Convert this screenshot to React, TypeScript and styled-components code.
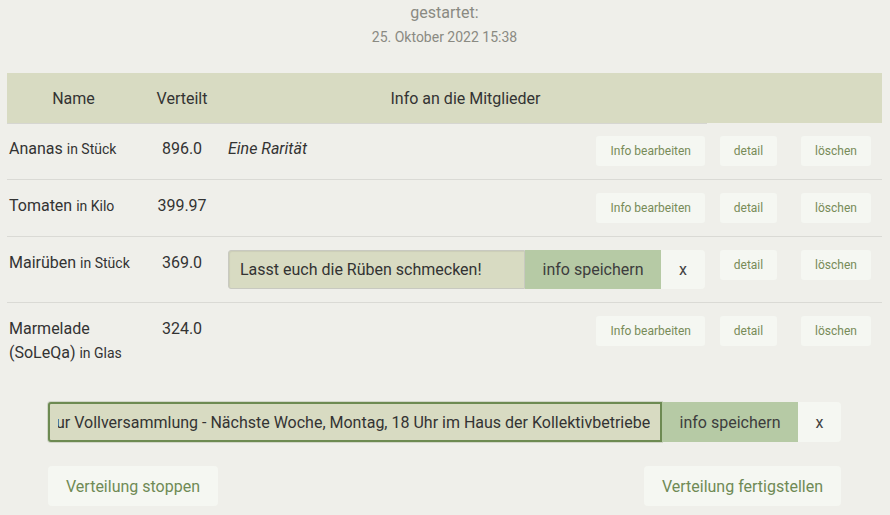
import React, { useEffect, useRef } from "react";
import styled, { createGlobalStyle } from "styled-components";

const Global = createGlobalStyle`
  html, body { margin: 0; padding: 0; background: #efefea; }
  body { font-family: Roboto, "Noto Sans", sans-serif; color: #333; }
  * { box-sizing: border-box; }
`;

const Page = styled.div`
  width: 890px;
  padding: 0 8px 0 7px;
`;

const Started = styled.div`
  text-align: center;
  color: #8a8a82;
  margin-bottom: 25px;
`;

const StartedLabel = styled.div`
  font-size: 16px;
  line-height: 26px;
`;

const StartedDate = styled.div`
  font-size: 14px;
  line-height: 22px;
`;

const cols = "133px 84px 483px 83px 92px";

const HeadRow = styled.div`
  display: grid;
  grid-template-columns: ${cols};
  height: 50px;
  background: #d8dbc2;
  align-items: center;
`;

const HeadCell = styled.div<{ $line?: boolean }>`
  height: 100%;
  display: flex;
  align-items: center;
  justify-content: center;
  font-size: 16px;
  color: #333;
  box-shadow: ${(p) => (p.$line ? "0 1px 0 #d6d6d1" : "none")};
`;

const Row = styled.div<{ $last?: boolean }>`
  display: grid;
  grid-template-columns: ${cols};
  align-items: start;
  padding: 13px 0;
  border-bottom: ${(p) => (p.$last ? "none" : "1px solid #dadad5")};
`;

const NameCell = styled.div`
  padding: 1px 0 0 2px;
  font-size: 16px;
  line-height: 24px;
  color: #333;
`;

const Unit = styled.span`
  font-size: 14px;
`;

const NumCell = styled.div`
  padding-top: 1px;
  text-align: center;
  font-size: 16px;
  line-height: 24px;
  color: #333;
`;

const InfoCell = styled.div`
  display: flex;
  align-items: flex-start;
  padding: 0 2px 0 4px;
  min-height: 30px;
`;

const InfoText = styled.em`
  padding-top: 1px;
  font-size: 16px;
  line-height: 24px;
  color: #333;
`;

const ActionCell = styled.div`
  display: flex;
  justify-content: center;
`;

const SmallButton = styled.button<{ $push?: boolean }>`
  height: 30px;
  padding: 0 14px;
  margin-left: ${(p) => (p.$push ? "auto" : "0")};
  border: none;
  border-radius: 3px;
  background: #f5f7f2;
  color: #788b58;
  font-family: Roboto, sans-serif;
  font-size: 12px;
  cursor: pointer;
`;

const Group = styled.div<{ $h: number }>`
  display: flex;
  width: 100%;
  height: ${(p) => p.$h}px;
`;

const InfoInput = styled.input<{ $focus?: boolean }>`
  flex: 1;
  min-width: 0;
  height: 100%;
  background: #d8dbc2;
  border: ${(p) => (p.$focus ? "2px solid #6d8a52" : "1px solid #c8c9c0")};
  border-radius: 3px 0 0 3px;
  box-shadow: ${(p) =>
    p.$focus ? "0 0 0 1px rgba(120,140,100,0.25)" : "inset 1px 1px 1px rgba(0,0,0,0.06)"};
  padding: ${(p) => (p.$focus ? "0 10px 0 8px" : "0 10px 0 11px")};
  font-family: Roboto, sans-serif;
  font-size: 16px;
  color: #333;
  outline: none;
`;

const SaveButton = styled.button<{ $w: number }>`
  width: ${(p) => p.$w}px;
  height: 100%;
  border: none;
  background: #b6caa5;
  color: #3d3d3d;
  font-family: Roboto, sans-serif;
  font-size: 16px;
  cursor: pointer;
`;

const CloseButton = styled.button<{ $w: number }>`
  width: ${(p) => p.$w}px;
  height: 100%;
  border: none;
  border-radius: 0 4px 4px 0;
  background: #f5f7f2;
  color: #444;
  font-family: Roboto, sans-serif;
  font-size: 16px;
  cursor: pointer;
`;

const Bottom = styled.div`
  display: flex;
  flex-direction: column;
  gap: 24px;
  padding: 24px 41px 0 41px;
`;

const Actions = styled.div`
  display: flex;
  justify-content: space-between;
`;

const BigButton = styled.button`
  height: 40px;
  padding: 0 18px;
  border: none;
  border-radius: 4px;
  background: #f5f7f2;
  color: #6f8a55;
  font-family: Roboto, sans-serif;
  font-size: 16px;
  cursor: pointer;
`;

type Item = {
  name: string;
  unit: string;
  amount: string;
  info?: string;
  editing?: boolean;
  editText?: string;
};

const items: Item[] = [
  { name: "Ananas", unit: "in Stück", amount: "896.0", info: "Eine Rarität" },
  { name: "Tomaten", unit: "in Kilo", amount: "399.97" },
  {
    name: "Mairüben",
    unit: "in Stück",
    amount: "369.0",
    editing: true,
    editText: "Lasst euch die Rüben schmecken!",
  },
  { name: "Marmelade (SoLeQa)", unit: "in Glas", amount: "324.0" },
];

const longText =
  "Einladung zur Vollversammlung - Nächste Woche, Montag, 18 Uhr im Haus der Kollektivbetriebe";

export default function App() {
  const ref = useRef<HTMLInputElement>(null);
  useEffect(() => {
    const el = ref.current;
    if (el) {
      el.scrollLeft = el.scrollWidth;
      const t = setTimeout(() => {
        el.scrollLeft = el.scrollWidth;
      }, 50);
      return () => clearTimeout(t);
    }
  }, []);

  return (
    <Page>
      <Global />
      <Started>
        <StartedLabel>gestartet:</StartedLabel>
        <StartedDate>25. Oktober 2022 15:38</StartedDate>
      </Started>

      <HeadRow>
        <HeadCell $line>Name</HeadCell>
        <HeadCell $line>Verteilt</HeadCell>
        <HeadCell $line>Info an die Mitglieder</HeadCell>
        <HeadCell />
        <HeadCell />
      </HeadRow>

      {items.map((it, i) => (
        <Row key={it.name} $last={i === items.length - 1}>
          <NameCell>
            {it.name} <Unit>{it.unit}</Unit>
          </NameCell>
          <NumCell>{it.amount}</NumCell>
          <InfoCell>
            {it.editing ? (
              <Group $h={39}>
                <InfoInput defaultValue={it.editText} />
                <SaveButton $w={136}>info speichern</SaveButton>
                <CloseButton $w={44}>x</CloseButton>
              </Group>
            ) : (
              <>
                {it.info && <InfoText>{it.info}</InfoText>}
                <SmallButton $push>Info bearbeiten</SmallButton>
              </>
            )}
          </InfoCell>
          <ActionCell>
            <SmallButton>detail</SmallButton>
          </ActionCell>
          <ActionCell>
            <SmallButton>löschen</SmallButton>
          </ActionCell>
        </Row>
      ))}

      <Bottom>
        <Group $h={40}>
          <InfoInput ref={ref} $focus defaultValue={longText} />
          <SaveButton $w={136}>info speichern</SaveButton>
          <CloseButton $w={43}>x</CloseButton>
        </Group>
        <Actions>
          <BigButton>Verteilung stoppen</BigButton>
          <BigButton>Verteilung fertigstellen</BigButton>
        </Actions>
      </Bottom>
    </Page>
  );
}
